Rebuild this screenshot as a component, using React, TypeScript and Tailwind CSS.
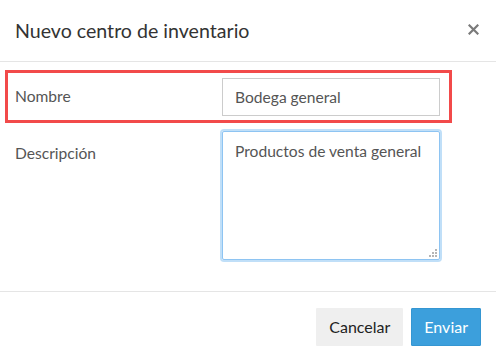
import React from 'react';

const CloseIcon: React.FC = () => (
  <svg width="11" height="11" viewBox="0 0 11 11" className="text-[#7a7a7a]">
    <path d="M1.5 1.5 L9.5 9.5 M9.5 1.5 L1.5 9.5" stroke="currentColor" strokeWidth="2.2" strokeLinecap="square" />
  </svg>
);

// dotted resize grip like the reference
const Grip: React.FC = () => (
  <svg width="8" height="8" viewBox="0 0 8 8" className="absolute right-[3px] bottom-[3px] text-[#b5b5b5]">
    <rect x="6" y="0" width="2" height="2" fill="currentColor" />
    <rect x="3" y="3" width="2" height="2" fill="currentColor" />
    <rect x="6" y="3" width="2" height="2" fill="currentColor" />
    <rect x="0" y="6" width="2" height="2" fill="currentColor" />
    <rect x="3" y="6" width="2" height="2" fill="currentColor" />
    <rect x="6" y="6" width="2" height="2" fill="currentColor" />
  </svg>
);

const App: React.FC = () => (
  <div className="w-[496px] h-[361px] bg-white flex flex-col font-['Lato','Open_Sans',sans-serif]">
    {/* header */}
    <div className="h-[62px] px-[15px] flex items-center justify-between border-b border-[#e5e5e5]">
      <h4 className="text-[19.6px] text-[#333] leading-none">Nuevo centro de inventario</h4>
      <button className="mr-[2px] mb-[2px]">
        <CloseIcon />
      </button>
    </div>

    {/* body */}
    <div className="flex-1 pl-[5px] pt-[8px]">
      <div className="w-[447px] h-[53px] border-[3px] border-[#f24a4a] pl-[7px] pr-[9px] flex items-center justify-between">
        <label className="text-[15.6px] text-[#555]">Nombre</label>
        <input
          readOnly
          value="Bodega general"
          className="w-[218px] h-[38px] border border-[#ccc] px-[12px] text-[15.6px] text-[#555] outline-none"
        />
      </div>
      <div className="w-[447px] mt-[8px] pl-[10px] pr-[12px] flex justify-between">
        <label className="text-[15.6px] text-[#555] pt-[11px]">Descripción</label>
        <div className="relative">
          <textarea
            readOnly
            value="Productos de venta general"
            className="block w-[218px] h-[129px] resize-none border border-[#8ec4f2] shadow-[0_0_0_2px_rgba(140,196,242,0.55)] rounded-[2px] px-[12px] py-[9px] text-[15.6px] leading-[21px] text-[#555] outline-none"
          />
          <Grip />
        </div>
      </div>
    </div>

    {/* footer */}
    <div className="h-[70px] border-t border-[#e5e5e5] flex justify-end items-start gap-[8px] pt-[16px] pr-[15px]">
      <button className="h-[38px] px-[13px] bg-[#efefef] text-[16px] text-[#222] rounded-[1px]">Cancelar</button>
      <button className="h-[38px] px-[12px] bg-[#3c9fdc] border border-[#3596d2] text-[16px] text-white rounded-[1px]">Enviar</button>
    </div>
  </div>
);

export default App;
